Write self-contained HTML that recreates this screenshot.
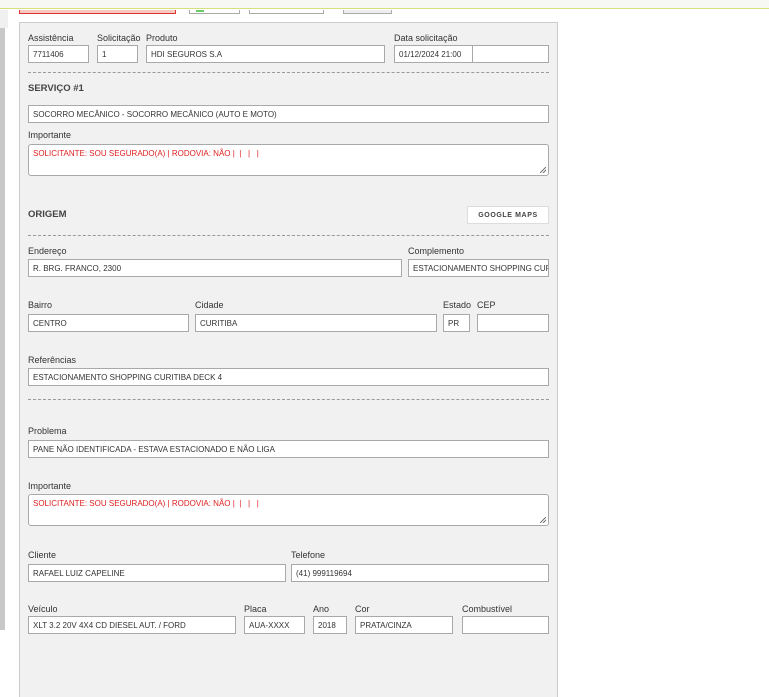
<!DOCTYPE html>
<html><head><meta charset="utf-8"><style>
*{margin:0;padding:0;box-sizing:border-box}
html,body{width:769px;height:697px;overflow:hidden}
body{background:#fff;position:relative;font-family:"Liberation Sans",sans-serif;font-size:9px;color:#333}
.a{position:absolute}
.l{position:absolute;font-size:9px;color:#333;white-space:nowrap}
.i{position:absolute;height:18px;border:1px solid #a9a9a9;background:#fff;font-size:8px;line-height:17px;padding-left:4px;color:#333;white-space:nowrap;overflow:hidden}
.t{position:absolute;border:1px solid #a9a9a9;border-radius:3px;background:#fff;font-size:8px;color:#e02020;padding:4px 4px;white-space:nowrap}
.t:after{content:"";position:absolute;right:2px;bottom:2px;width:6px;height:6px;background:linear-gradient(135deg,transparent 45%,#777 45%,#777 55%,transparent 55%,transparent 70%,#777 70%,#777 80%,transparent 80%)}
.d{position:absolute;left:28px;width:521px;border-top:1px dashed #999}
.b{position:absolute;font-weight:bold;font-size:9.5px;color:#444}
</style></head><body>
<div class="a" style="left:0;top:0;width:769px;height:9px;background:#f7f7f4;border-bottom:1px solid #d6e07e"></div>
<div class="a" style="left:19px;top:10px;width:157px;height:4px;background:#f6c8c0;border:1px solid #d33;border-top:none"></div>
<div class="a" style="left:189px;top:10px;width:51px;height:4px;border:1px solid #aaa;border-top:none"></div>
<div class="a" style="left:196px;top:10px;width:8px;height:2px;background:#6c6"></div>
<div class="a" style="left:249px;top:10px;width:75px;height:4px;border:1px solid #aaa;border-top:none"></div>
<div class="a" style="left:343px;top:10px;width:49px;height:4px;border:1px solid #aaa;border-top:none;background:#eee"></div>
<div class="a" style="left:0;top:10px;width:8px;height:18px;background:#f0f0f0"></div>
<div class="a" style="left:0;top:28px;width:5px;height:602px;background:#c8c8c8"></div>
<div class="a" style="left:19px;top:22px;width:539px;height:680px;background:#f1f1f1;border:1px solid #ccc"></div>

<div class="l" style="left:28px;top:33px">Assistência</div>
<div class="l" style="left:97px;top:33px">Solicitação</div>
<div class="l" style="left:146px;top:33px">Produto</div>
<div class="l" style="left:394px;top:33px">Data solicitação</div>
<div class="i" style="left:28px;top:45px;width:61px">7711406</div>
<div class="i" style="left:97px;top:45px;width:41px">1</div>
<div class="i" style="left:146px;top:45px;width:239px">HDI SEGUROS S.A</div>
<div class="i" style="left:394px;top:45px;width:79px">01/12/2024 21:00</div>
<div class="i" style="left:472px;top:45px;width:77px"></div>
<div class="d" style="top:72px"></div>
<div class="b" style="left:28px;top:83px">SERVIÇO #1</div>
<div class="i" style="left:28px;top:105px;width:521px">SOCORRO MECÂNICO - SOCORRO MECÂNICO (AUTO E MOTO)</div>
<div class="l" style="left:28px;top:130px">Importante</div>
<div class="t" style="left:28px;top:144px;width:521px;height:32px">SOLICITANTE: SOU SEGURADO(A) | RODOVIA: NÃO |&nbsp; |&nbsp;&nbsp; |&nbsp;&nbsp; |</div>
<div class="b" style="left:28px;top:209px">ORIGEM</div>
<div class="a" style="left:467px;top:206px;width:82px;height:18px;background:#fff;border:1px solid #ddd;font-size:7px;font-weight:bold;color:#444;text-align:center;line-height:17px;letter-spacing:.6px">GOOGLE MAPS</div>
<div class="d" style="top:235px"></div>
<div class="l" style="left:28px;top:246px">Endereço</div>
<div class="l" style="left:408px;top:246px">Complemento</div>
<div class="i" style="left:28px;top:259px;width:374px">R. BRG. FRANCO, 2300</div>
<div class="i" style="left:408px;top:259px;width:141px">ESTACIONAMENTO SHOPPING CURITIBA</div>
<div class="l" style="left:28px;top:300px">Bairro</div>
<div class="l" style="left:195px;top:300px">Cidade</div>
<div class="l" style="left:443px;top:300px">Estado</div>
<div class="l" style="left:477px;top:300px">CEP</div>
<div class="i" style="left:28px;top:314px;width:161px">CENTRO</div>
<div class="i" style="left:195px;top:314px;width:242px">CURITIBA</div>
<div class="i" style="left:443px;top:314px;width:27px">PR</div>
<div class="i" style="left:477px;top:314px;width:72px"></div>
<div class="l" style="left:28px;top:355px">Referências</div>
<div class="i" style="left:28px;top:368px;width:521px">ESTACIONAMENTO SHOPPING CURITIBA DECK 4</div>
<div class="d" style="top:399px"></div>
<div class="l" style="left:28px;top:426px">Problema</div>
<div class="i" style="left:28px;top:440px;width:521px">PANE NÃO IDENTIFICADA - ESTAVA ESTACIONADO E NÃO LIGA</div>
<div class="l" style="left:28px;top:481px">Importante</div>
<div class="t" style="left:28px;top:494px;width:521px;height:32px">SOLICITANTE: SOU SEGURADO(A) | RODOVIA: NÃO |&nbsp; |&nbsp;&nbsp; |&nbsp;&nbsp; |</div>
<div class="l" style="left:28px;top:550px">Cliente</div>
<div class="l" style="left:291px;top:550px">Telefone</div>
<div class="i" style="left:28px;top:564px;width:258px">RAFAEL LUIZ CAPELINE</div>
<div class="i" style="left:291px;top:564px;width:258px">(41) 999119694</div>
<div class="l" style="left:28px;top:604px">Veículo</div>
<div class="l" style="left:244px;top:604px">Placa</div>
<div class="l" style="left:313px;top:604px">Ano</div>
<div class="l" style="left:355px;top:604px">Cor</div>
<div class="l" style="left:462px;top:604px">Combustível</div>
<div class="i" style="left:28px;top:616px;width:208px">XLT 3.2 20V 4X4 CD DIESEL AUT. / FORD</div>
<div class="i" style="left:244px;top:616px;width:61px">AUA-XXXX</div>
<div class="i" style="left:313px;top:616px;width:34px">2018</div>
<div class="i" style="left:355px;top:616px;width:98px">PRATA/CINZA</div>
<div class="i" style="left:462px;top:616px;width:87px"></div>
</body></html>
